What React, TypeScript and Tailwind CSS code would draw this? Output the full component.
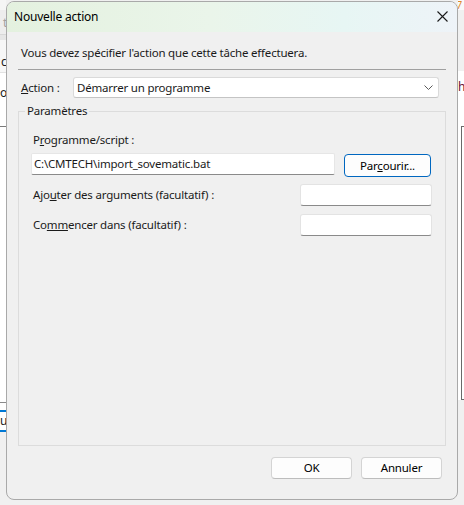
import React from "react";

function LeftStrip() {
  return (
    <div className="w-[6px] shrink-0 flex flex-col overflow-hidden text-[12px] leading-[14px] font-['Noto_Sans',sans-serif]">
      <div className="h-[10px] bg-[#f5f5f5]" />
      <div className="h-[24px] bg-[#ededed] pl-[3px] pt-[6px] text-[#a0a0a0]">t</div>
      <div className="h-[6px] bg-[#e6e6e6] border-t border-[#d8d8d8]" />
      <div className="h-[32px] bg-[#f7f7f7] pl-[1px] pt-[15px] text-[#1a1a1a]">c</div>
      <div className="h-[54px] bg-white border-t border-[#e2e2e2] pt-[13px] text-[#1a1a1a]">o</div>
      <div className="h-[276px] bg-white border-t border-[#7a7a7a]" />
      <div className="h-[8px] bg-white border-t border-[#8a8a8a]" />
      <div className="h-[22px] bg-white border-y-2 border-[#0078d4] pt-[2px] text-[#1a1a1a] tracking-tight">u.</div>
      <div className="flex-1 bg-[#f0f0f0]" />
    </div>
  );
}

function RightStrip() {
  return (
    <div className="w-[6px] shrink-0 flex flex-col overflow-hidden text-[12px] leading-[14px] font-['Noto_Sans',sans-serif]">
      <div className="h-[10px] bg-[#fafafa] text-[#e08a2a] text-[11px] leading-[10px] ml-[-2px]">7</div>
      <div className="h-[61px] bg-[#f0f0f0]" />
      <div className="h-[55px] bg-white pt-[9px] text-[#6b1030]">h</div>
      <div className="h-[274px] bg-white flex">
        <div className="ml-[3px] w-[3px] border-l border-t border-b border-[#6a6a6a]" />
      </div>
      <div className="flex-1 bg-[#f0f0f0]" />
    </div>
  );
}

function Field({ className }: { className: string }) {
  return (
    <div
      className={
        "h-[22px] bg-white border border-[#e3e3e3] border-b-[#8a8a8a] rounded-[3px] " +
        className
      }
    />
  );
}

export default function App() {
  return (
    <div className="w-[464px] h-[505px] flex bg-[#f0f0f0] overflow-hidden text-[11.5px] tracking-[-0.2px] text-[#1a1a1a] font-['Noto_Sans',sans-serif]">
      <LeftStrip />

      <div className="mt-[1px] w-[452px] h-[499px] shrink-0 flex flex-col bg-[#f0f0f0] border border-[#a9a9a9] rounded-[8px] overflow-hidden">
        {/* Title bar */}
        <div className="h-[30px] shrink-0 flex items-center justify-between pl-[7px] pr-[9px] bg-[linear-gradient(90deg,#e4f1df_0%,#eaf5ea_45%,#e7f6f4_75%,#eef3f8_100%)]">
          <span className="text-[12px] leading-[16px] text-black">Nouvelle action</span>
          <svg width="11" height="11" viewBox="0 0 11 11" className="mb-[1px]">
            <path d="M0.5 0.5 L10.5 10.5 M10.5 0.5 L0.5 10.5" stroke="#1a1a1a" strokeWidth="1.1" />
          </svg>
        </div>

        {/* Body */}
        <div className="flex-1 flex flex-col px-[11px]">
          <p className="mt-[13px] pl-[3px] leading-[16px]">
            Vous devez spécifier l'action que cette tâche effectuera.
          </p>
          <div className="mt-[8px] border-t border-[#a0a0a0]" />

          <div className="mt-[7px] flex items-center h-[21px]">
            <span className="w-[55px] pl-[3px] leading-[16px]">
              <u>A</u>ction :
            </span>
            <div className="w-[366px] h-[21px] flex items-center justify-between bg-white border border-[#dadada] border-b-[#c4c4c4] rounded-[3px] pl-[3px] pr-[5px]">
              <span className="leading-[16px]">Démarrer un programme</span>
              <svg width="9" height="5" viewBox="0 0 9 5">
                <path d="M0.5 0.5 L4.5 4.5 L8.5 0.5" fill="none" stroke="#5a5a5a" strokeWidth="1" />
              </svg>
            </div>
          </div>

          <fieldset className="mt-[5px] h-[343px] border border-[#dcdcdc] px-[12px] pt-[13px]">
            <legend className="ml-[-6px] px-[2px] leading-[16px]">Paramètres</legend>

            <div className="pl-[2px] leading-[16px]">
              P<u>r</u>ogramme/script :
            </div>
            <div className="mt-[5px] flex items-start">
              <div className="w-[304px] h-[22px] flex items-center bg-white border border-[#e6e6e6] border-b-[#8a8a8a] rounded-[2px] pl-[2px] leading-[16px]">
                C:\CMTECH\import_sovematic.bat
              </div>
              <button className="ml-[9px] mt-[1px] w-[87px] h-[23px] bg-[#fdfdfd] border border-[#0067c0] rounded-[4px] leading-[16px] text-black">
                Par<u>c</u>ourir...
              </button>
            </div>

            <div className="mt-[7px] flex items-center justify-between">
              <span className="pl-[2px] leading-[16px]">
                Ajo<u>u</u>ter des arguments (facultatif) :
              </span>
              <Field className="w-[132px] mr-[1px]" />
            </div>

            <div className="mt-[8px] flex items-center justify-between">
              <span className="pl-[2px] leading-[16px]">
                Co<u>mm</u>encer dans (facultatif) :
              </span>
              <Field className="w-[132px] mr-[1px]" />
            </div>
          </fieldset>

          <div className="mt-[11px] flex justify-end gap-[9px] pr-[4px]">
            <button className="w-[81px] h-[22px] bg-[#fdfdfd] border border-[#d4d4d4] border-b-[#bdbdbd] rounded-[4px] leading-[16px] text-black">
              OK
            </button>
            <button className="w-[81px] h-[22px] bg-[#fdfdfd] border border-[#d4d4d4] border-b-[#bdbdbd] rounded-[4px] leading-[16px] text-black">
              Annuler
            </button>
          </div>
        </div>
      </div>

      <RightStrip />
    </div>
  );
}
